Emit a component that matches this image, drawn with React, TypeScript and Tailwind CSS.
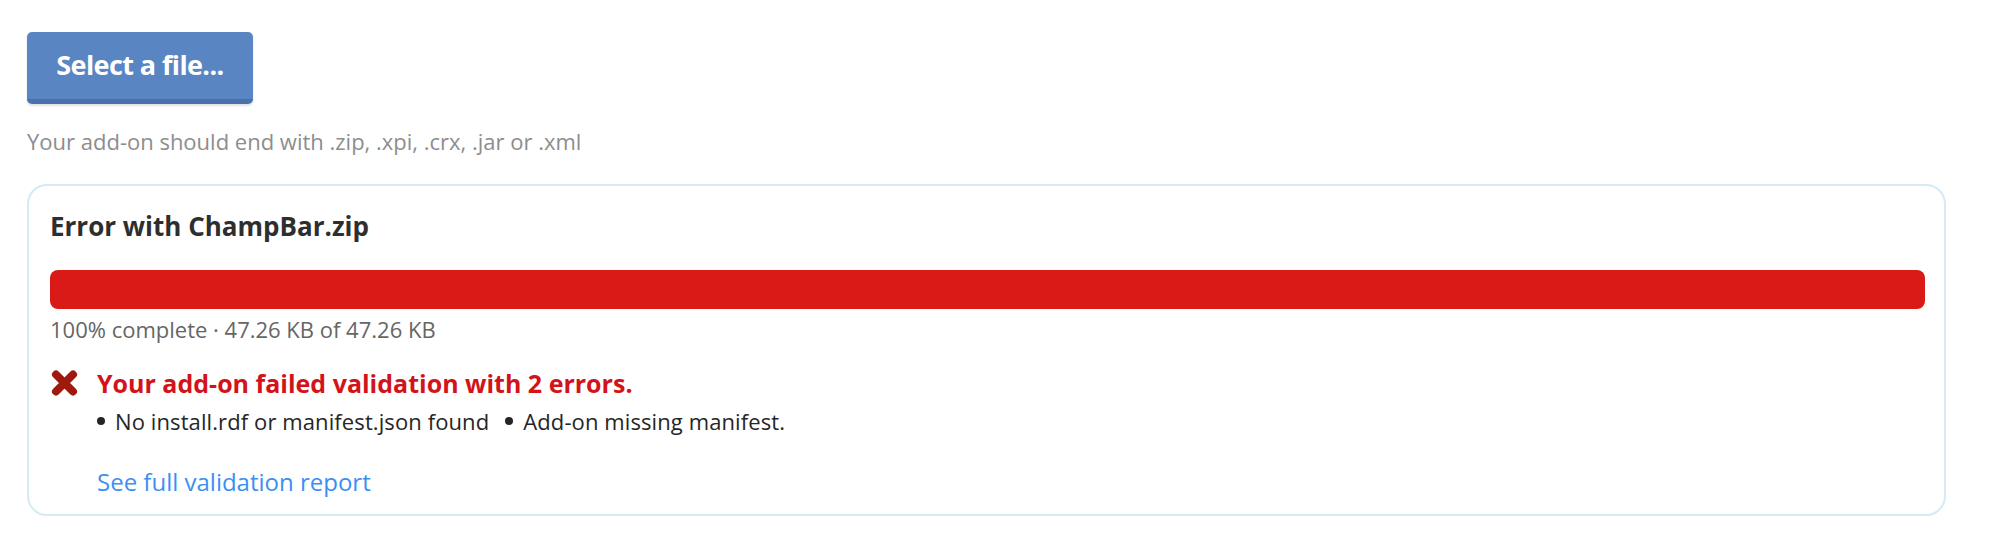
import React from 'react';

const ErrorCross: React.FC = () => (
  <svg width="29" height="28" viewBox="0 0 29 28" className="shrink-0">
    <path d="M6 5.5 L23 22.5 M23 5.5 L6 22.5" stroke="#a0190f" strokeWidth="8" strokeLinecap="round" fill="none" />
  </svg>
);

const App: React.FC = () => {
  const errors = ['No install.rdf or manifest.json found', 'Add-on missing manifest.'];

  return (
    <div className="bg-white min-h-screen pl-[27px] pr-[48px] pt-[32px] font-['Open_Sans',sans-serif]">
      <button className="h-[72px] w-[226px] rounded-[5px] bg-[#5986c3] border-b-[5px] border-[#4a71aa] text-white font-bold text-[27px] tracking-[-0.6px] shadow-[0_2px_2px_rgba(0,0,0,0.12)]">
        Select a file...
      </button>
      <p className="mt-[23px] text-[22px] leading-[28px] text-[#8d8d8d]">
        Your add-on should end with .zip, .xpi, .crx, .jar or .xml
      </p>

      <div className="mt-[29px] rounded-[20px] border-2 border-[#d4ebf6] pl-[21px] pr-[19px] pt-[24px] pb-[17px]">
        <h2 className="text-[26px] leading-[32px] font-bold text-[#2e2e2e]">Error with ChampBar.zip</h2>
        <div className="mt-[28px] h-[39px] w-full rounded-[8px] bg-[#d91a17]" />
        <div className="mt-[6px] text-[22px] leading-[28px] text-[#666666]">100% complete · 47.26 KB of 47.26 KB</div>

        <div className="mt-[24px] flex items-center gap-[18px]">
          <ErrorCross />
          <span className="text-[25px] leading-[32px] font-bold text-[#d3131a]">
            Your add-on failed validation with 2 errors.
          </span>
        </div>
        <ul className="mt-[8px] ml-[47px] flex gap-[16px] text-[22px] leading-[28px] text-[#262626] tracking-[0.1px]">
          {errors.map(e => (
            <li key={e} className="flex items-center gap-[10px]">
              <span className="inline-block h-[8px] w-[8px] rounded-full bg-[#262626]" />
              {e}
            </li>
          ))}
        </ul>
        <a href="#" className="mt-[32px] ml-[47px] block text-[24px] leading-[30px] text-[#3c8ff2]">
          See full validation report
        </a>
      </div>
    </div>
  );
};

export default App;
